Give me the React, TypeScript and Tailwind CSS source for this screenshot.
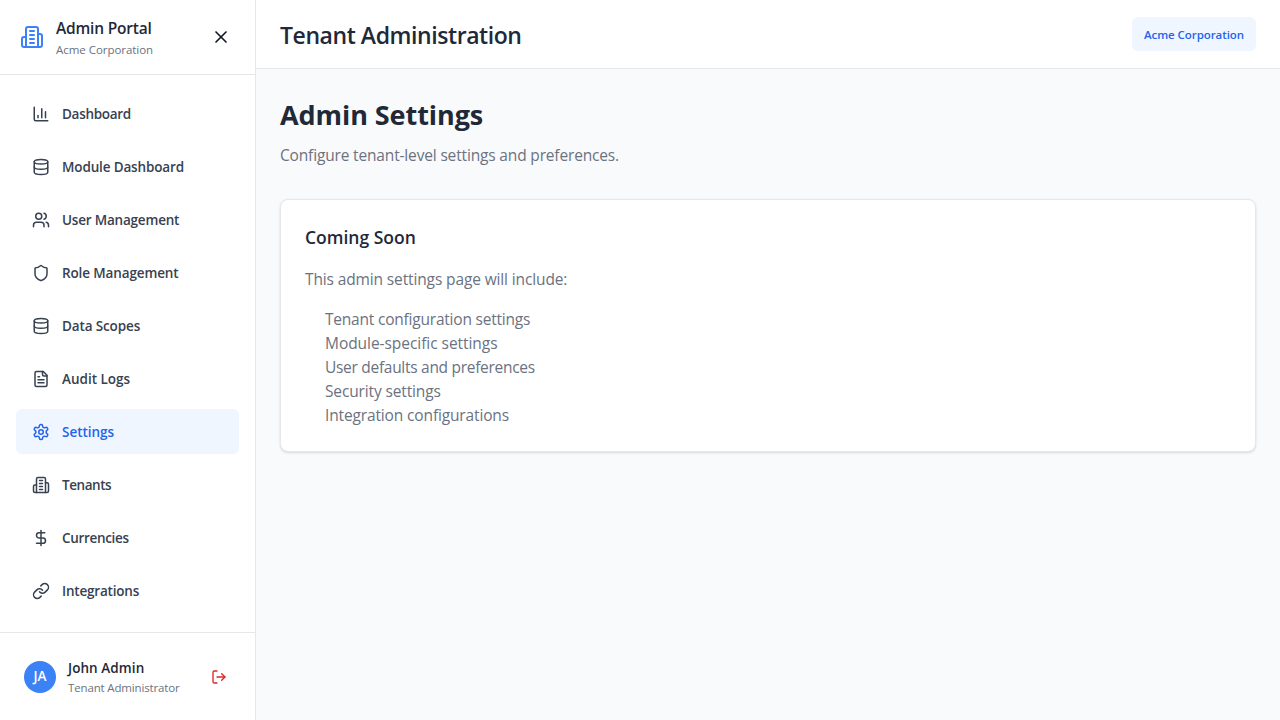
import React from 'react';
import { ChartColumn, Database, Users, Shield, DollarSign, Link, LogOut, X } from 'lucide-react';

type IconProps = { size?: number; className?: string };

function Glyph({ size = 24, className, children }: IconProps & { children: React.ReactNode }) {
  return (
    <svg
      width={size}
      height={size}
      viewBox="0 0 24 24"
      fill="none"
      stroke="currentColor"
      strokeWidth={2}
      strokeLinecap="round"
      strokeLinejoin="round"
      className={className}
    >
      {children}
    </svg>
  );
}

function BuildingIcon(props: IconProps) {
  return (
    <Glyph {...props}>
      <path d="M6 22V4a2 2 0 0 1 2-2h8a2 2 0 0 1 2 2v18Z" />
      <path d="M6 12H4a2 2 0 0 0-2 2v6a2 2 0 0 0 2 2h2" />
      <path d="M18 9h2a2 2 0 0 1 2 2v9a2 2 0 0 1-2 2h-2" />
      <path d="M10 6h4" />
      <path d="M10 10h4" />
      <path d="M10 14h4" />
      <path d="M10 18h4" />
    </Glyph>
  );
}

function DocumentIcon(props: IconProps) {
  return (
    <Glyph {...props}>
      <path d="M15 2H6a2 2 0 0 0-2 2v16a2 2 0 0 0 2 2h12a2 2 0 0 0 2-2V7Z" />
      <path d="M14 2v4a2 2 0 0 0 2 2h4" />
      <path d="M10 9H8" />
      <path d="M16 13H8" />
      <path d="M16 17H8" />
    </Glyph>
  );
}

function GearIcon(props: IconProps) {
  return (
    <Glyph {...props}>
      <path d="M12.22 2h-.44a2 2 0 0 0-2 2v.18a2 2 0 0 1-1 1.73l-.43.25a2 2 0 0 1-2 0l-.15-.08a2 2 0 0 0-2.73.73l-.22.38a2 2 0 0 0 .73 2.73l.15.1a2 2 0 0 1 1 1.72v.51a2 2 0 0 1-1 1.74l-.15.09a2 2 0 0 0-.73 2.73l.22.38a2 2 0 0 0 2.73.73l.15-.08a2 2 0 0 1 2 0l.43.25a2 2 0 0 1 1 1.73V20a2 2 0 0 0 2 2h.44a2 2 0 0 0 2-2v-.18a2 2 0 0 1 1-1.73l.43-.25a2 2 0 0 1 2 0l.15.08a2 2 0 0 0 2.73-.73l.22-.39a2 2 0 0 0-.73-2.73l-.15-.08a2 2 0 0 1-1-1.74v-.5a2 2 0 0 1 1-1.74l.15-.09a2 2 0 0 0 .73-2.73l-.22-.38a2 2 0 0 0-2.73-.73l-.15.08a2 2 0 0 1-2 0l-.43-.25a2 2 0 0 1-1-1.73V4a2 2 0 0 0-2-2z" />
      <circle cx="12" cy="12" r="3" />
    </Glyph>
  );
}

const items: { label: string; icon: React.ComponentType<IconProps>; tracking: string }[] = [
  { label: 'Dashboard', icon: ChartColumn, tracking: 'tracking-[-0.3px]' },
  { label: 'Module Dashboard', icon: Database, tracking: 'tracking-[-0.15px]' },
  { label: 'User Management', icon: Users, tracking: 'tracking-[-0.2px]' },
  { label: 'Role Management', icon: Shield, tracking: 'tracking-[-0.13px]' },
  { label: 'Data Scopes', icon: Database, tracking: 'tracking-[-0.13px]' },
  { label: 'Audit Logs', icon: DocumentIcon, tracking: 'tracking-[0px]' },
  { label: 'Settings', icon: GearIcon, tracking: 'tracking-[-0.03px]' },
  { label: 'Tenants', icon: BuildingIcon, tracking: 'tracking-[-0.45px]' },
  { label: 'Currencies', icon: DollarSign, tracking: 'tracking-[-0.32px]' },
  { label: 'Integrations', icon: Link, tracking: 'tracking-[-0.2px]' },
];

const features: { text: string; tracking: string }[] = [
  { text: 'Tenant configuration settings', tracking: 'tracking-[-0.21px]' },
  { text: 'Module-specific settings', tracking: 'tracking-[-0.05px]' },
  { text: 'User defaults and preferences', tracking: 'tracking-[-0.29px]' },
  { text: 'Security settings', tracking: 'tracking-[-0.14px]' },
  { text: 'Integration configurations', tracking: 'tracking-[-0.14px]' },
];

function Sidebar() {
  return (
    <aside className="flex w-64 shrink-0 flex-col border-r border-[#e5e7eb] bg-white">
      <div className="flex h-[75px] shrink-0 items-center border-b border-[#e5e7eb] px-5">
        <BuildingIcon size={24} className="text-[#3b82f6]" />
        <div className="ml-3 flex-1 pt-0.5">
          <div className="text-[15.5px] leading-[19px] font-semibold tracking-[-0.19px] text-[#1f2937]">Admin Portal</div>
          <div className="mt-1 text-[11.5px] leading-4 tracking-[-0.04px] text-[#6b7280]">Acme Corporation</div>
        </div>
        <X size={20} className="mr-1 text-[#111827]" />
      </div>
      <nav className="flex flex-1 flex-col gap-2 px-4 pt-4">
        {items.map(({ label, icon: Icon, tracking }) => (
          <a
            key={label}
            className={
              label === 'Settings'
                ? 'flex h-[45px] items-center gap-3 rounded-md bg-[#eff6ff] px-4 text-[13.5px] font-semibold text-[#2563eb]'
                : 'flex h-[45px] items-center gap-3 rounded-md px-4 text-[13.5px] font-semibold text-[#374151]'
            }
          >
            <Icon size={18} />
            <span className={`pt-0.5 ${tracking}`}>{label}</span>
          </a>
        ))}
      </nav>
      <div className="flex h-[88px] shrink-0 items-center border-t border-[#e5e7eb] px-6">
        <div className="flex size-8 items-center justify-center rounded-full bg-[#3b82f6] text-[13.5px] font-semibold text-white">JA</div>
        <div className="ml-3 flex-1 pt-0.5">
          <div className="text-[13.5px] leading-5 font-semibold tracking-[0.08px] text-[#1f2937]">John Admin</div>
          <div className="text-[11.5px] leading-5 tracking-[-0.15px] text-[#6b7280]">Tenant Administrator</div>
        </div>
        <LogOut size={16} className="mr-1 text-[#dc2626]" />
      </div>
    </aside>
  );
}

export default function App() {
  return (
    <div className="flex h-screen overflow-hidden bg-[#f9fafb] font-['Open_Sans','Noto_Sans',sans-serif]">
      <Sidebar />
      <main className="flex-1">
        <header className="flex h-[69px] items-center justify-between border-b border-[#e5e7eb] bg-white px-6">
          <h1 className="pt-0.5 text-[23px] leading-8 font-semibold tracking-[-0.43px] text-[#1f2937]">Tenant Administration</h1>
          <div className="flex h-[34px] items-center rounded-md bg-[#eff6ff] px-3 pt-0.5 text-[11.5px] font-semibold tracking-[-0.07px] text-[#2563eb]">
            Acme Corporation
          </div>
        </header>
        <div className="p-6">
          <h2 className="text-[27px] leading-[43px] font-bold tracking-[-0.07px] text-[#1f2937]">Admin Settings</h2>
          <p className="mt-[7px] text-[15.5px] leading-6 tracking-[-0.16px] text-[#6b7280]">
            Configure tenant-level settings and preferences.
          </p>
          <section className="mt-8 h-[253px] rounded-lg border border-[#e5e7eb] bg-white p-6 shadow-sm">
            <h3 className="text-[17.5px] leading-[27px] font-semibold text-[#1f2937]">Coming Soon</h3>
            <p className="mt-4 text-[15.5px] leading-6 tracking-[-0.13px] text-[#6b7280]">This admin settings page will include:</p>
            <ul className="mt-4 pl-5 text-[15.5px] leading-6 text-[#6b7280]">
              {features.map(({ text, tracking }) => (
                <li key={text} className={tracking}>
                  {text}
                </li>
              ))}
            </ul>
          </section>
        </div>
      </main>
    </div>
  );
}
